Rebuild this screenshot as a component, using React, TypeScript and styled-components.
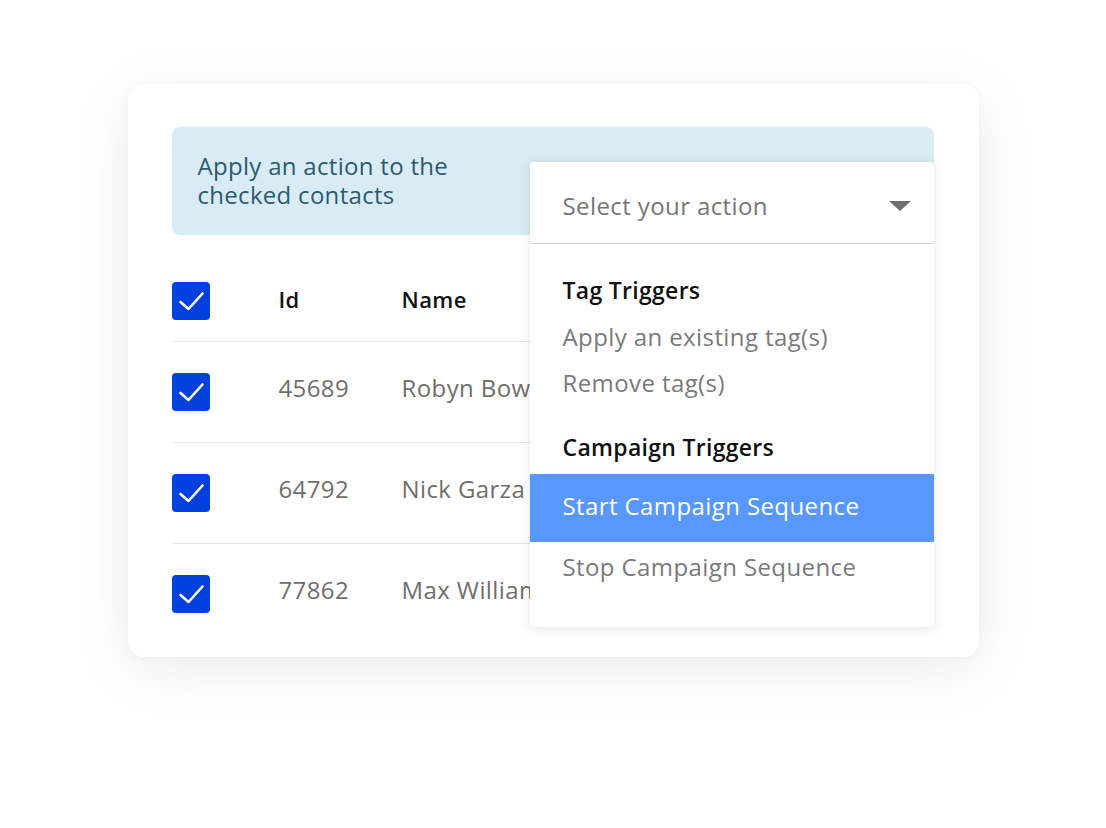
import styled, { createGlobalStyle } from "styled-components";

const GlobalStyle = createGlobalStyle`
  html, body {
    margin: 0;
    padding: 0;
    background: #ffffff;
    font-family: "Open Sans", "Noto Sans", sans-serif;
  }
`;

const Page = styled.div`
  width: 1106px;
  height: 828px;
  display: flex;
  justify-content: center;
  align-items: flex-start;
  padding-top: 84px;
  box-sizing: border-box;
`;

const Card = styled.div`
  position: relative;
  width: 851px;
  height: 573px;
  box-sizing: border-box;
  padding: 43px 45px 0 44px;
  background: #ffffff;
  border-radius: 16px;
  box-shadow: 0 12px 60px rgba(0, 0, 0, 0.08), 0 2px 10px rgba(0, 0, 0, 0.03);
`;

const Banner = styled.div`
  height: 108px;
  display: flex;
  align-items: center;
  padding-left: 26px;
  background: #d9ecf5;
  border-radius: 8px;
`;

const BannerText = styled.div`
  width: 300px;
  font-size: 24px;
  line-height: 29px;
  font-weight: 500;
  color: #2c5a72;
  letter-spacing: 0.3px;
  padding-bottom: 2px;
`;

const Table = styled.div`
  margin-top: 26px;
  display: flex;
  flex-direction: column;
`;

const Row = styled.div<{ $header?: boolean }>`
  display: grid;
  grid-template-columns: 107px 123px 1fr;
  align-items: center;
  height: ${(p) => (p.$header ? "80px" : "100px")};
  border-bottom: 1px solid #e6e6e6;
  font-size: ${(p) => (p.$header ? "22px" : "24px")};
  color: ${(p) => (p.$header ? "#111111" : "#706e6b")};
  font-weight: ${(p) => (p.$header ? 600 : 400)};
  letter-spacing: 0.4px;

  &:last-child {
    border-bottom: none;
  }
`;

const Cell = styled.div<{ $lift: number }>`
  white-space: nowrap;
  padding-bottom: ${(p) => p.$lift}px;
`;

const Box = styled.div`
  width: 38px;
  height: 38px;
  border-radius: 4px;
  background: #0041dc;
  display: flex;
  align-items: center;
  justify-content: center;
`;

const Dropdown = styled.div`
  position: absolute;
  left: 402px;
  top: 78px;
  width: 404px;
  height: 465px;
  background: #ffffff;
  border-radius: 4px;
  box-shadow: 0 2px 12px rgba(0, 0, 0, 0.1), 0 0 2px rgba(0, 0, 0, 0.05);
  display: flex;
  flex-direction: column;
`;

const Select = styled.div`
  height: 82px;
  display: flex;
  align-items: center;
  justify-content: space-between;
  padding: 6px 23px 0 33px;
  box-sizing: border-box;
  border-bottom: 1px solid #d4d4d4;
  font-size: 24px;
  color: #767676;
  letter-spacing: 0.4px;
`;

const Caret = styled.div`
  width: 0;
  height: 0;
  border-left: 11.5px solid transparent;
  border-right: 11.5px solid transparent;
  border-top: 10px solid #6f6f6f;
`;

const Menu = styled.div`
  padding-top: 23px;
  display: flex;
  flex-direction: column;
`;

const GroupTitle = styled.div<{ $gap?: number }>`
  height: 46px;
  display: flex;
  align-items: center;
  padding-left: 33px;
  margin-top: ${(p) => p.$gap ?? 0}px;
  font-size: 23px;
  font-weight: 600;
  color: #111111;
  letter-spacing: 0.3px;
`;

const Item = styled.div<{ $active?: boolean; $h?: number }>`
  height: ${(p) => p.$h ?? 46}px;
  display: flex;
  align-items: center;
  padding-left: 33px;
  padding-bottom: ${(p) => (p.$active ? 6 : 0)}px;
  box-sizing: border-box;
  font-size: 24px;
  letter-spacing: 0.4px;
  color: ${(p) => (p.$active ? "#ffffff" : "#7a7a7a")};
  background: ${(p) => (p.$active ? "#5897fb" : "transparent")};
`;

const Check = () => (
  <Box>
    <svg width="38" height="38" viewBox="0 0 38 38">
      <polyline
        points="8.5,20 16.5,27 30.5,11.5"
        fill="none"
        stroke="#ffffff"
        strokeWidth="2.6"
        strokeLinecap="round"
        strokeLinejoin="round"
      />
    </svg>
  </Box>
);

const contacts = [
  { id: "45689", name: "Robyn Bowman" },
  { id: "64792", name: "Nick Garza" },
  { id: "77862", name: "Max Williams" },
];

export default function App() {
  return (
    <>
      <GlobalStyle />
      <Page>
        <Card>
          <Banner>
            <BannerText>Apply an action to the checked contacts</BannerText>
          </Banner>
          <Table>
            <Row $header>
              <Check />
              <Cell $lift={5}>Id</Cell>
              <Cell $lift={5}>Name</Cell>
            </Row>
            {contacts.map((c) => (
              <Row key={c.id}>
                <Check />
                <Cell $lift={9}>{c.id}</Cell>
                <Cell $lift={9}>{c.name}</Cell>
              </Row>
            ))}
          </Table>
          <Dropdown>
            <Select>
              Select your action
              <Caret />
            </Select>
            <Menu>
              <GroupTitle>Tag Triggers</GroupTitle>
              <Item>Apply an existing tag(s)</Item>
              <Item>Remove tag(s)</Item>
              <GroupTitle $gap={19}>Campaign Triggers</GroupTitle>
              <Item $active $h={68} style={{ marginTop: 4 }}>
                Start Campaign Sequence
              </Item>
              <Item $h={48}>Stop Campaign Sequence</Item>
            </Menu>
          </Dropdown>
        </Card>
      </Page>
    </>
  );
}
